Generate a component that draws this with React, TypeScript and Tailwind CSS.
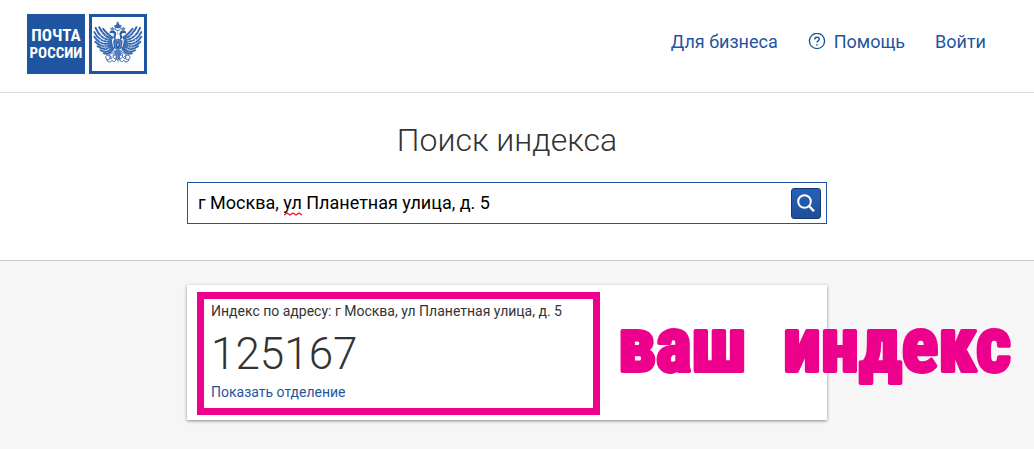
import React, { useState } from 'react';

const navLink = 'flex items-center gap-2 text-lg text-[#1f55a0] hover:underline';

// One half of the double-headed eagle, mirrored around x = 90
const EagleHalf = () => (
  <g>
    {/* wing feathers */}
    <g fill="none" stroke="#3468b2" strokeWidth="6" strokeLinecap="round">
      <path d="M70 82C52 80 32 68 23 44" />
      <path d="M70 86C48 89 30 78 19 57" />
      <path d="M71 90C50 98 32 90 19 71" />
      <path d="M72 94C53 106 37 101 22 86" />
      <path d="M73 99C58 113 44 111 29 100" />
      <path d="M75 103C64 118 51 119 38 112" />
      <path d="M77 107C70 120 61 125 48 121" />
      <path d="M72 77C57 73 43 60 34 42" />
      <path d="M74 73C64 68 54 57 46 47" />
    </g>
    <g fill="none" stroke="#ffffff" strokeWidth="2" strokeDasharray="3 4">
      <path d="M64 74C54 84 54 98 63 108" />
      <path d="M54 66C44 82 45 96 55 110" />
      <path d="M43 58C34 72 35 88 44 104" />
    </g>
    {/* head and small crown */}
    <path d="M83 82C75 76 76 69 80 64C77 60 73 59 68 60L65 63L66 56C69 51 77 50 82 54C87 59 86 65 84 69Z" fill="#2a5fac" />
    <path d="M69 50L67 43L71 45L74 40L77 45L81 43L80 50Z" fill="#4f7bba" />
    {/* claws with sceptre and orb */}
    <g fill="none" stroke="#3567ae" strokeWidth="3" strokeLinecap="round">
      <path d="M82 112C76 123 69 119 65 127" />
      <path d="M65 127C54 123 50 136 57 140C65 144 70 135 65 127" />
      <path d="M57 140C56 148 68 151 73 143" />
      <path d="M68 130C77 133 73 141 66 137" />
      <path d="M80 119C72 130 77 137 84 139" />
      <path d="M73 143C76 150 84 147 85 140" />
    </g>
    <path d="M91 106L82 114L79 130L84 128L83 143L88 140L90 153Z" fill="#4f7bba" />
    <path d="M76 83L90 76V112L79 105Z" fill="#2a5fac" />
  </g>
);

const Eagle = () => (
  <svg viewBox="12 14 158 158" className="h-full w-full" aria-hidden="true">
    <EagleHalf />
    <g transform="matrix(-1 0 0 1 181 0)">
      <EagleHalf />
    </g>
    <path d="M82 45L79 35L85 36L87 30H94L96 36L102 35L99 45Z" fill="#3567ae" />
    <path d="M90 25V33M86 28H94" stroke="#3567ae" strokeWidth="2" />
    <path d="M82 48C86 53 95 53 99 48" fill="none" stroke="#3567ae" strokeWidth="3" />
    <path d="M90 53V66" stroke="#7c9dcd" strokeWidth="2" />
    <path d="M83 84H98V97C98 103 94 106 90 108C86 106 83 103 83 97Z" fill="#1f55a0" stroke="#ffffff" strokeWidth="1" />
    <path d="M87 90L93 99M94 88L88 101" stroke="#c5d4e9" strokeWidth="2" />
  </svg>
);

const Logo = () => (
  <a href="#" aria-label="Почта России" className="flex gap-1">
    <span className="flex h-[60px] w-[58px] flex-col items-center justify-center bg-[#1f55a0] font-['Liberation_Sans_Narrow','Roboto_Condensed','Roboto',sans-serif] leading-[18px] font-bold text-white">
      <span className="text-[17px]">ПОЧТА</span>
      <span className="text-[15px]">РОССИИ</span>
    </span>
    <span className="h-[60px] w-[58px] border-3 border-[#1f55a0] bg-white">
      <Eagle />
    </span>
  </a>
);

const Header = () => (
  <header className="border-b border-[#d9d9d9] bg-white">
    <div className="flex items-start justify-between pt-3.5 pr-12 pb-[18px] pl-[27px]">
      <Logo />
      <nav className="flex gap-[30px] pt-3.5">
        <a href="#" className={navLink}>Для бизнеса</a>
        <a href="#" className={navLink}>
          <svg viewBox="0 0 18 18" className="h-[18px] w-[18px]" fill="none" stroke="currentColor" strokeWidth="1.4" aria-hidden="true">
            <circle cx="9" cy="8" r="7.6" />
            <path d="M6.7 6.5C6.7 5 7.7 4.3 9 4.3C10.3 4.3 11.3 5 11.3 6.3C11.3 7.9 9 7.9 9 9.6" />
            <path d="M9 10.9V12.4" />
          </svg>
          Помощь
        </a>
        <a href="#" className={navLink}>Войти</a>
      </nav>
    </div>
  </header>
);

const SearchSection = () => {
  const [address, setAddress] = useState('г Москва, ул Планетная улица, д. 5');

  return (
    <section className="border-b border-[#cccccc] bg-white pt-[27px] pr-5 pb-9">
      <h1 className="text-center text-[32px] leading-10 font-light text-[#333333]">
        <label htmlFor="address">Поиск индекса</label>
      </h1>
      <form
        className="relative mx-auto mt-[22px] flex h-[42px] max-w-[640px] items-center border border-[#1f55a0] bg-white pr-[5px]"
        onSubmit={(e) => e.preventDefault()}
      >
        <input
          id="address"
          type="text"
          spellCheck={false}
          value={address}
          onChange={(e) => setAddress(e.target.value)}
          className="h-full min-w-0 flex-1 bg-transparent pb-0.5 pl-2.5 text-lg text-black outline-none"
        />
        {/* spelling mark under the second word */}
        <svg viewBox="0 0 18 4" className="absolute top-[29px] left-24 h-1 w-[18px]" fill="none" stroke="#e8112d" aria-hidden="true">
          <path d="M0 3L3 1L6 3L9 1L12 3L15 1L18 3" strokeWidth="1.4" />
        </svg>
        <button
          type="submit"
          aria-label="Найти"
          className="flex h-[31px] w-[30px] items-center justify-center rounded-[3px] border border-[#173a70] bg-linear-to-b from-[#2561b8] to-[#1d4f99]"
        >
          <svg viewBox="0 0 20 20" className="h-5 w-5" fill="none" stroke="#ffffff" aria-hidden="true">
            <circle cx="8.5" cy="8.5" r="6.3" strokeWidth="2" />
            <path d="M13 13L18 18.3" strokeWidth="2.4" />
          </svg>
        </button>
      </form>
    </section>
  );
};

const ResultSection = () => (
  <section className="flex-1 bg-[#f6f6f6] pt-6 pr-5 pb-7">
    <div className="relative mx-auto max-w-[640px] bg-white px-2.5 pt-[7px] pb-[5px] shadow-[0_1px_3px_rgba(0,0,0,0.45)]">
      <div className="max-w-[403px] border-7 border-[#ec008c] px-[7px] pt-0.5 pb-[5px]">
        <p className="text-sm leading-5 text-[#333333]">Индекс по адресу: г Москва, ул Планетная улица, д. 5</p>
        <p className="pt-1.5 text-[44px] leading-[54px] font-light text-[#333333]">125167</p>
        <a href="#" className="block text-sm leading-[22px] text-[#1f55a0] hover:underline">Показать отделение</a>
      </div>
      {/* big note that runs past the card */}
      <svg
        className="absolute top-5 left-[428px] h-24 w-[410px] overflow-visible font-['Liberation_Sans_Narrow','Roboto_Condensed','Roboto',sans-serif] text-[76px] font-bold"
        fill="#ec008c"
        stroke="#ec008c"
        strokeWidth="4"
        strokeLinejoin="round"
      >
        <text x="3" y="66">ваш</text>
        <text x="168" y="66">индекс</text>
      </svg>
    </div>
  </section>
);

const App = () => (
  <div className="flex min-h-screen flex-col overflow-x-hidden bg-white font-['Roboto',sans-serif]">
    <Header />
    <SearchSection />
    <ResultSection />
  </div>
);

export default App;
